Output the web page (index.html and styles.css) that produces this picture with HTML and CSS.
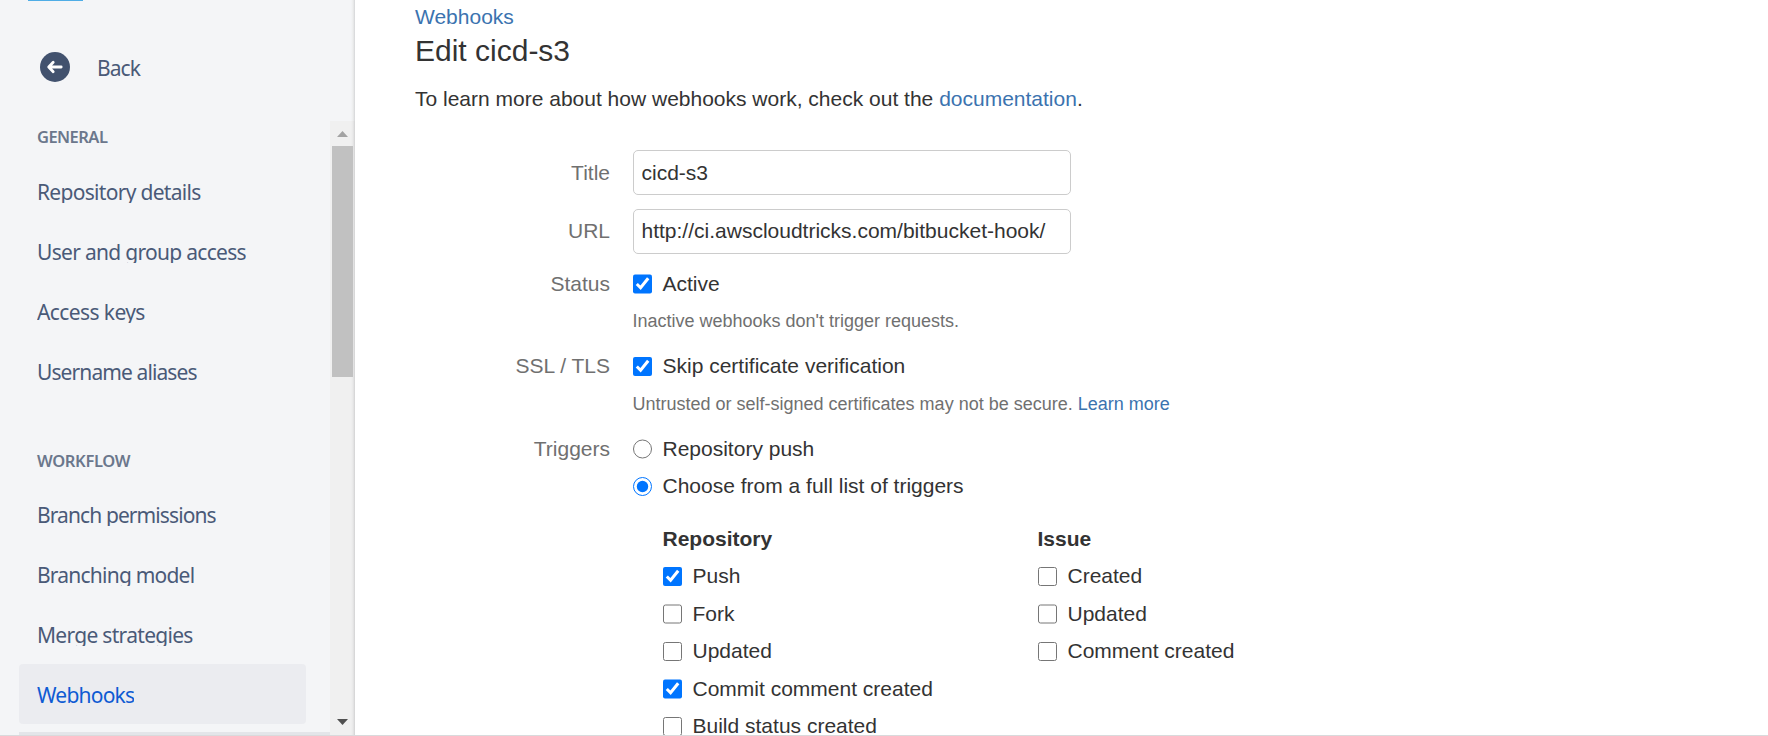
FILE: index.html
```html
<!DOCTYPE html>
<html lang="en">
<head>
<meta charset="utf-8">
<title>Edit cicd-s3</title>
<link rel="stylesheet" href="styles.css">
</head>
<body>
<div class="app">
  <aside class="sidebar">
    <div class="avatar-edge"></div>
    <a class="back">
      <svg width="30" height="30" viewBox="0 0 30 30"><circle cx="15" cy="15" r="15" fill="#42526e"/><path d="M21.200 15H9.200M13.200 10.200L8.700 15l4.500 4.800" fill="none" stroke="#fff" stroke-width="2.800" stroke-linecap="round" stroke-linejoin="round"/></svg>
      <span class="back-text">Back</span>
    </a>
    <div class="nav-area">
      <nav class="nav">
        <h2 class="group">GENERAL</h2>
        <a class="item"><span class="tight-1">Repository details</span></a>
        <a class="item"><span class="tight-1">User and group access</span></a>
        <a class="item"><span>Access keys</span></a>
        <a class="item"><span class="tight-3">Username aliases</span></a>
        <h2 class="group group-workflow">WORKFLOW</h2>
        <a class="item"><span class="tight-3">Branch permissions</span></a>
        <a class="item"><span class="tight-2">Branching model</span></a>
        <a class="item"><span class="tight-1">Merge strategies</span></a>
        <a class="item selected"><span class="tight-2">Webhooks</span></a>
        <div class="divider"></div>
      </nav>
      <div class="scrollbar">
        <svg class="arrow-up" width="11" height="6" viewBox="0 0 11 6"><path d="M0 6L5.500 0L11 6Z" fill="#a3a3a3"/></svg>
        <div class="thumb"></div>
        <svg class="arrow-down" width="11" height="6" viewBox="0 0 11 6"><path d="M0 0L5.500 6L11 0Z" fill="#505050"/></svg>
      </div>
    </div>
  </aside>
  <main class="main">
    <a class="crumb">Webhooks</a>
    <h1 class="title">Edit cicd-s3</h1>
    <p class="intro">To learn more about how webhooks work, check out the <a>documentation</a>.</p>
    <form class="form">
      <div class="field text-field"><label class="label">Title</label><input class="text" type="text" value="cicd-s3"></div>
      <div class="field text-field url-field"><label class="label">URL</label><input class="text" type="text" value="http://ci.awscloudtricks.com/bitbucket-hook/"></div>
      <div class="field">
        <span class="label">Status</span>
        <div>
          <label class="choice"><input type="checkbox" checked>Active</label>
          <p class="help">Inactive webhooks don't trigger requests.</p>
        </div>
      </div>
      <div class="field">
        <span class="label label-ssl">SSL / TLS</span>
        <div>
          <label class="choice"><input type="checkbox" checked>Skip certificate verification</label>
          <p class="help help-ssl">Untrusted or self-signed certificates may not be secure. <a>Learn more</a></p>
        </div>
      </div>
      <div class="field">
        <span class="label">Triggers</span>
        <div>
          <label class="choice"><input type="radio" name="t">Repository push</label>
          <label class="choice"><input type="radio" name="t" checked>Choose from a full list of triggers</label>
          <div class="triggers">
            <div>
              <h3>Repository</h3>
              <label class="choice"><input type="checkbox" checked>Push</label>
              <label class="choice"><input type="checkbox">Fork</label>
              <label class="choice"><input type="checkbox">Updated</label>
              <label class="choice"><input type="checkbox" checked>Commit comment created</label>
              <label class="choice"><input type="checkbox">Build status created</label>
            </div>
            <div>
              <h3>Issue</h3>
              <label class="choice"><input type="checkbox">Created</label>
              <label class="choice"><input type="checkbox">Updated</label>
              <label class="choice"><input type="checkbox">Comment created</label>
            </div>
          </div>
        </div>
      </div>
    </form>
  </main>
</div>
</body>
</html>
```
FILE: styles.css
```css
* { box-sizing: border-box; }
html, body { margin: 0; height: 736px; overflow: hidden; background: #fff; }
h1, h2, h3, p { margin: 0; font-weight: normal; }
.app {
  display: flex;
  height: 736px;
  overflow: hidden;
  border-bottom: 1px solid #d9dadc;
  font-family: "Liberation Sans", Arial, sans-serif;
  font-size: 21px;
  color: #333;
}
.sidebar {
  flex: none;
  width: 355px;
  height: 735px;
  display: flex;
  flex-direction: column;
  background: linear-gradient(to right, #f4f5f7 351px, #eceded 353px, #d5d6d8 355px);
  color: #4a5a78;
  font-family: "Noto Sans", sans-serif;
}
.avatar-edge { width: 55px; height: 1px; margin-left: 28px; background: #4fade6; flex: none; }
.back { display: flex; margin: 51px 0 0 40px; height: 69px; flex: none; }
.back-text { margin-left: 27px; line-height: 33px; font-size: 21px; letter-spacing: -0.95px; }
.nav-area { display: flex; height: 614px; }
.nav { width: 330px; padding-left: 19px; }
.group {
  height: 40px;
  padding: 3px 0 0 18px;
  line-height: 26px;
  font-size: 16.5px;
  font-weight: 600;
  letter-spacing: -0.55px;
  color: #6b778c;
}
.group-workflow { margin-top: 43px; padding-top: 4px; letter-spacing: -0.35px; }
.item { display: flex; align-items: center; width: 287px; height: 60px; padding: 0 0 0 18px; border-radius: 4px; }
.item span { height: 23px; line-height: 24px; overflow: hidden; white-space: nowrap; font-size: 21px; letter-spacing: -0.6px; }
.item .tight-1 { letter-spacing: -0.7px; }
.item .tight-2 { letter-spacing: -0.78px; }
.item .tight-3 { letter-spacing: -0.9px; }
.selected { background: #ebecf0; color: #0f5bd3; }
.divider { height: 3px; margin-top: 8px; width: 312px; background: #e3e5e9; }
.scrollbar {
  width: 25px;
  display: flex;
  flex-direction: column;
  align-items: center;
  background: linear-gradient(to right, #f0f0f0 21px, #e8e8e8 23px, #d2d2d3 25px);
}
.arrow-up { margin-top: 10px; flex: none; }
.thumb { width: 21px; height: 231px; margin-top: 9px; background: #c1c1c1; }
.arrow-down { margin-top: auto; margin-bottom: 10px; }
.main { padding-left: 60px; flex: 1; }
.main a { color: #3b73af; }
.crumb { display: block; line-height: 30px; margin-top: 2px; }
.title { font-size: 30px; line-height: 38px; }
.intro { line-height: 38px; margin-top: 10px; }
.form { margin-top: 32px; }
.field { display: flex; margin-bottom: 7.5px; }
.text-field { align-items: center; margin-bottom: 14px; }
.text-field + .field:not(.text-field) { margin-top: -3px; }
.label { width: 195px; margin-right: 22.5px; text-align: right; line-height: 37px; color: #707070; }
.label-ssl { line-height: 36px; }
.text {
  width: 438.5px;
  height: 45px;
  padding: 0 8px;
  border: 1px solid #ccc;
  border-radius: 5px;
  font: 21px "Liberation Sans", Arial, sans-serif;
  color: #333;
}
.url-field .text { padding-bottom: 2px; }
.url-field .label { padding-bottom: 2px; }
.choice { display: flex; align-items: center; height: 37.5px; }
.choice input { width: 19.5px; height: 19.5px; margin: 0 10.5px 0 0; }
.help { font-size: 18px; line-height: 37.5px; color: #707070; }
.help-ssl { padding-top: 1px; margin-bottom: -1px; }
.triggers { display: grid; grid-template-columns: 375px auto; padding: 15px 0 0 30px; }
.triggers h3 { font-size: 21px; font-weight: bold; line-height: 37.5px; }
```
